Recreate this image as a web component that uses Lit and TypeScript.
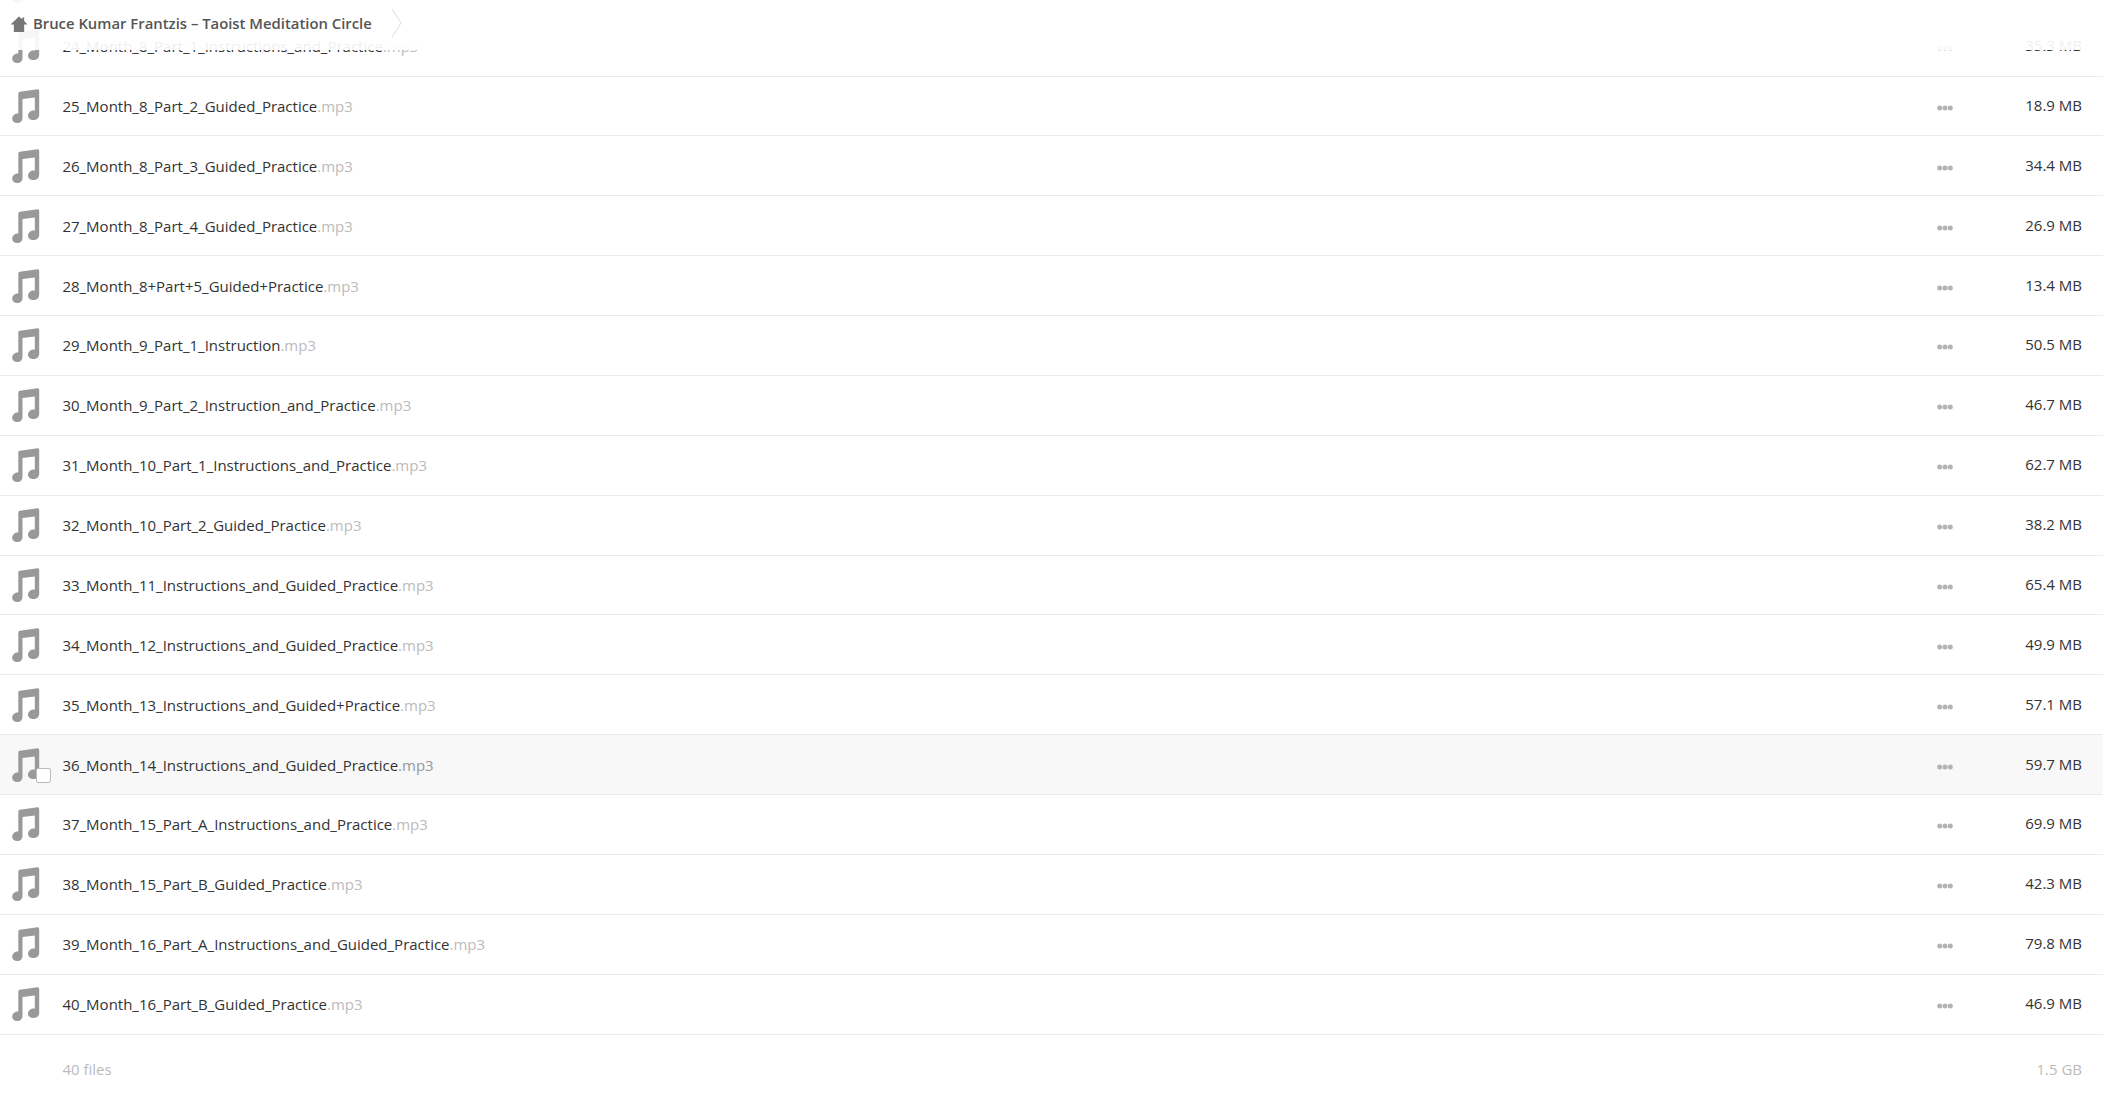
import { LitElement, html, css } from "lit";
import { customElement } from "lit/decorators.js";

const rows: [string, string][] = [
  ["", ""],
  ["24_Month_8_Part_1_Instructions_and_Practice", "35.3 MB"],
  ["25_Month_8_Part_2_Guided_Practice", "18.9 MB"],
  ["26_Month_8_Part_3_Guided_Practice", "34.4 MB"],
  ["27_Month_8_Part_4_Guided_Practice", "26.9 MB"],
  ["28_Month_8+Part+5_Guided+Practice", "13.4 MB"],
  ["29_Month_9_Part_1_Instruction", "50.5 MB"],
  ["30_Month_9_Part_2_Instruction_and_Practice", "46.7 MB"],
  ["31_Month_10_Part_1_Instructions_and_Practice", "62.7 MB"],
  ["32_Month_10_Part_2_Guided_Practice", "38.2 MB"],
  ["33_Month_11_Instructions_and_Guided_Practice", "65.4 MB"],
  ["34_Month_12_Instructions_and_Guided_Practice", "49.9 MB"],
  ["35_Month_13_Instructions_and_Guided+Practice", "57.1 MB"],
  ["36_Month_14_Instructions_and_Guided_Practice", "59.7 MB"],
  ["37_Month_15_Part_A_Instructions_and_Practice", "69.9 MB"],
  ["38_Month_15_Part_B_Guided_Practice", "42.3 MB"],
  ["39_Month_16_Part_A_Instructions_and_Guided_Practice", "79.8 MB"],
  ["40_Month_16_Part_B_Guided_Practice", "46.9 MB"],
];

@customElement("app-root")
export class AppRoot extends LitElement {
  static styles = css`
    :host {
      display: block;
      position: relative;
      height: 1105px;
      overflow: hidden;
      background: #fff;
      font-family: "Open Sans", "Noto Sans", sans-serif;
      font-size: 15px;
      color: #333;
    }
    .list {
      margin-top: -43.25px;
    }
    .row {
      height: 59.875px;
      box-sizing: border-box;
      border-bottom: 1px solid #ebebeb;
      display: flex;
      align-items: center;
      padding-right: 21px;
      position: relative;
    }
    .row.hover {
      background: #f8f8f8;
    }
    .icon {
      width: 30px;
      height: 36px;
      margin-left: 11px;
      margin-right: 21.4px;
      flex: none;
      fill: #999;
    }
    .name {
      flex: 1;
      white-space: nowrap;
      color: #333;
    }
    .ext {
      color: #bbb;
    }
    .row.hover .ext {
      color: #999;
    }
    .dots {
      width: 16px;
      height: 6px;
      flex: none;
      fill: #b3b3b3;
      margin-right: 69px;
      margin-top: 4px;
    }
    .size {
      width: 60px;
      text-align: right;
      flex: none;
      margin-top: -2px;
    }
    .check {
      position: absolute;
      left: 35.5px;
      top: 33px;
      width: 15px;
      height: 15px;
      box-sizing: border-box;
      background: #fff;
      border: 1px solid #bbb;
      border-radius: 2px;
    }
    .foot {
      display: flex;
      justify-content: space-between;
      padding: 24px 21px 0 62.4px;
      color: #bbb;
    }
    .head {
      position: absolute;
      top: 0;
      left: 0;
      right: 0;
      height: 50px;
      background: rgba(255, 255, 255, 0.92);
      display: flex;
      align-items: center;
      padding: 0 0 4px 10px;
      box-sizing: border-box;
      color: #555;
      font-size: 14.85px;
      font-weight: 600;
    }
    .home {
      width: 18px;
      height: 16px;
      fill: #777;
      margin: 1px 5px 0 0;
      flex: none;
    }
    .chev {
      width: 11px;
      height: 30px;
      margin-left: 19px;
      fill: none;
      stroke: #ddd;
      stroke-width: 1;
      flex: none;
    }
  `;

  private note() {
    return html`<svg class="icon" viewBox="0 0 30 36">
      <path d="M7.3 5.5 Q7.3 4 8.8 3.8 L26.5 1.3 Q28.2 1.2 28.2 3 V27 C28.2 30 25.5 32 22.5 32 C19 32 17 30 17 27.7 C17 24.5 20 22.5 22.5 22.5 C23 22.5 23.5 22.6 23.8 22.7 V9.5 L11.5 11 V30 C11.5 33 9 35 6.5 35 C3 35 1.2 33 1.2 30.7 C1.2 27.5 4 25.5 6.8 25.5 L7.3 25.5 Z" />
    </svg>`;
  }

  render() {
    return html`
      <div class="list">
        ${rows.map(([n, s]) => {
          const hover = n.startsWith("36_");
          return html`<div class="row ${hover ? "hover" : ""}">
            ${this.note()}
            ${hover ? html`<span class="check"></span>` : ""}
            <div class="name">${n ? html`${n}<span class="ext">.mp3</span>` : ""}</div>
            ${n
              ? html`<svg class="dots" viewBox="0 0 16 6">
                    <circle cx="2.7" cy="3" r="2.5" /><circle cx="8" cy="3" r="2.5" /><circle cx="13.3" cy="3" r="2.5" />
                  </svg>
                  <div class="size">${s}</div>`
              : ""}
          </div>`;
        })}
      </div>
      <div class="foot"><span>40 files</span><span>1.5 GB</span></div>
      <div class="head">
        <svg class="home" viewBox="0 0 18 17">
          <path d="M9 0.5 L12.5 3.5 V1.5 H14.5 V5.3 L18 9 H14.5 V17 H3.5 V9 H0 Z" />
        </svg>
        <span>Bruce Kumar Frantzis – Taoist Meditation Circle</span>
        <svg class="chev" viewBox="0 0 11 30"><path d="M1 1 L10 15 L1 29" /></svg>
      </div>
    `;
  }
}
